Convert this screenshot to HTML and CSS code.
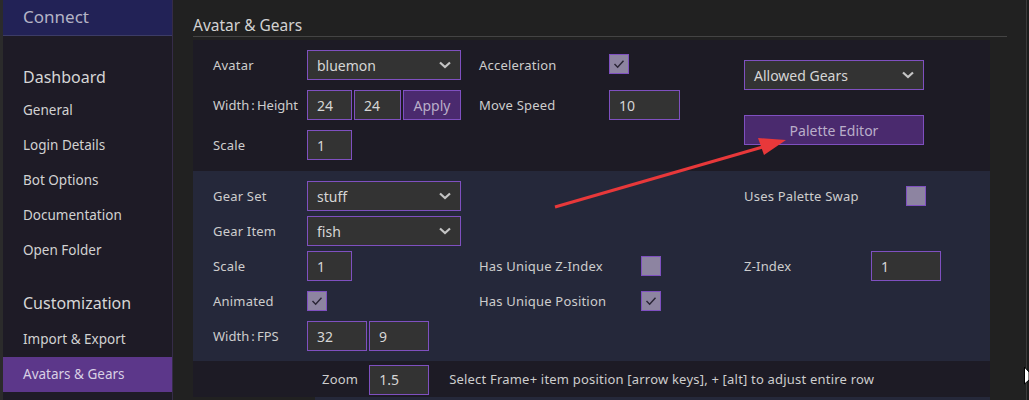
FILE: index.html
```html
<!DOCTYPE html>
<html lang="en">

<head>
    <meta charset="UTF-8">
    <meta name="viewport" content="width=device-width, initial-scale=1.0">
    <title>Avatars &amp; Gears</title>
    <link rel="stylesheet" href="styles.css">
</head>

<body>
    <div class="app">
        <div class="edge"></div>

        <!-- Menu lateral -->
        <nav class="sidebar">
            <div class="brand">Connect</div>
            <div class="nav-group first">Dashboard</div>
            <div class="nav-item">General</div>
            <div class="nav-item">Login Details</div>
            <div class="nav-item">Bot Options</div>
            <div class="nav-item">Documentation</div>
            <div class="nav-item">Open Folder</div>
            <div class="nav-group second">Customization</div>
            <div class="nav-item">Import &amp; Export</div>
            <div class="nav-item active">Avatars &amp; Gears</div>
        </nav>

        <main class="main">
            <h2 class="page-title">Avatar &amp; Gears</h2>

            <!-- Avatar -->
            <section class="panel panel-avatar">
                <label class="label c1 r1">Avatar</label>
                <div class="select c2 r1">
                    <span>bluemon</span>
                    <svg class="chevron" viewBox="0 0 12 8"><polyline points="1,1.5 6,6 11,1.5" /></svg>
                </div>

                <label class="label tight c1 r2">Width&thinsp;:&thinsp;Height</label>
                <div class="pair c2 r2">
                    <input class="field w45" value="24">
                    <input class="field w47" value="24">
                    <button class="btn w58">Apply</button>
                </div>

                <label class="label c1 r3">Scale</label>
                <div class="c2 r3 cell"><input class="field w45" value="1"></div>

                <label class="label c4 r1">Acceleration</label>
                <div class="c5 r1 cell">
                    <span class="check on up"><svg viewBox="0 0 20 20"><polyline points="5,10 8.5,13.5 15,6.5" /></svg></span>
                </div>

                <label class="label c4 r2">Move Speed</label>
                <div class="c5 r2 cell"><input class="field w71" value="10"></div>

                <div class="side-tools">
                    <div class="select wide">
                        <span>Allowed Gears</span>
                        <svg class="chevron" viewBox="0 0 12 8"><polyline points="1,1.5 6,6 11,1.5" /></svg>
                    </div>
                    <button class="btn wide palette-btn">Palette Editor</button>
                </div>
            </section>

            <!-- Gear -->
            <section class="panel panel-gear">
                <label class="label c1 r1">Gear Set</label>
                <div class="select c2 r1">
                    <span>stuff</span>
                    <svg class="chevron" viewBox="0 0 12 8"><polyline points="1,1.5 6,6 11,1.5" /></svg>
                </div>

                <label class="label c1 r2">Gear Item</label>
                <div class="select c2 r2">
                    <span>fish</span>
                    <svg class="chevron" viewBox="0 0 12 8"><polyline points="1,1.5 6,6 11,1.5" /></svg>
                </div>

                <label class="label c1 r3">Scale</label>
                <div class="c2 r3 cell"><input class="field w45" value="1"></div>

                <label class="label c1 r4">Animated</label>
                <div class="c2 r4 cell">
                    <span class="check on"><svg viewBox="0 0 20 20"><polyline points="5,10 8.5,13.5 15,6.5" /></svg></span>
                </div>

                <label class="label tight c1 r5">Width&thinsp;:&thinsp;FPS</label>
                <div class="pair c2 r5">
                    <input class="field w60" value="32">
                    <input class="field w60" value="9">
                </div>

                <label class="label c4 r3">Has Unique Z-Index</label>
                <div class="c5 r3 cell"><span class="check"></span></div>

                <label class="label c4 r4">Has Unique Position</label>
                <div class="c5 r4 cell">
                    <span class="check on"><svg viewBox="0 0 20 20"><polyline points="5,10 8.5,13.5 15,6.5" /></svg></span>
                </div>

                <label class="label c6 r1">Uses Palette Swap</label>
                <div class="c7 r1 cell"><span class="check push"></span></div>

                <label class="label c6 r3">Z-Index</label>
                <div class="c7 r3 cell"><input class="field w70" value="1"></div>
            </section>

            <div class="zoom-bar">
                <span class="label">Zoom</span>
                <input class="field w60" value="1.5">
                <span class="label hint">Select Frame+ item position [arrow keys], + [alt] to adjust entire row</span>
            </div>

            <div class="canvas"></div>
        </main>

        <div class="scroll-edge"></div>
    </div>

    <!-- Seta de anotação -->
    <svg class="annotation" viewBox="0 0 1029 400">
        <line x1="555" y1="207" x2="766" y2="146" />
        <polygon class="head" points="786,140 758,138 764,155" />
        <polygon class="cursor" points="1024.5,367 1024.5,384 1029,380 1029,372" />
    </svg>
</body>

</html>
```

FILE: styles.css
```css
body {
    margin: 0;
    background-color: #212121;
    font-family: "Noto Sans", "Open Sans", sans-serif;
    color: #d0d0d0;
    overflow: hidden;
}

.app {
    display: flex;
    height: 400px;
}

.edge {
    width: 3px;
    background-color: #2b2b2b;
}

/* Menu lateral */
.sidebar {
    width: 169px;
    background-color: #1e1b26;
    border-right: 1px solid #352c48;
    display: flex;
    flex-direction: column;
}

.brand {
    height: 35px;
    line-height: 34px;
    padding-left: 20px;
    background-color: #222256;
    border-bottom: 1px solid #3c3c66;
    color: #b4b4c6;
    font-size: 17px;
}

.nav-group {
    height: 26px;
    line-height: 26px;
    padding-left: 20px;
    font-size: 16px;
    color: #d6d6d6;
}

.nav-group.first {
    margin: 28px 0 3px;
}

.nav-group.second {
    margin: 22px 0 6px;
}

.nav-item {
    height: 35px;
    line-height: 35px;
    padding-left: 20px;
    font-size: 13.5px;
    color: #d2d2d2;
}

.nav-item.active {
    background-color: #5c378a;
    color: #d8d0e4;
}

/* Conteúdo */
.main {
    flex: 1;
    padding-left: 20px;
}

.page-title {
    width: 814px;
    margin: 0 0 3px;
    padding-top: 14px;
    height: 22px;
    line-height: 22px;
    font-size: 15.5px;
    font-weight: normal;
    color: #d2d2d2;
    border-bottom: 1px solid #444;
}

.panel {
    width: 777px;
    display: grid;
    grid-template-columns: 94px 154px 18px 130px 135px 1fr;
    grid-auto-rows: 30px;
    padding-left: 20px;
}

.panel-avatar {
    background-color: #1d1b25;
    row-gap: 10px;
    padding-top: 10px;
    padding-bottom: 11px;
}

.panel-gear {
    background-color: #25283a;
    grid-template-columns: 94px 154px 18px 162px 103px 127px 1fr;
    row-gap: 5px;
    padding-top: 10px;
    padding-bottom: 10px;
}

.c1 { grid-column: 1; }
.c2 { grid-column: 2; }
.c4 { grid-column: 4; }
.c5 { grid-column: 5; }
.c6 { grid-column: 6; }
.c7 { grid-column: 7; }
.r1 { grid-row: 1; }
.r2 { grid-row: 2; }
.r3 { grid-row: 3; }
.r4 { grid-row: 4; }
.r5 { grid-row: 5; }

.label {
    font-size: 13px;
    letter-spacing: 0.2px;
    color: #cdcdcd;
    display: flex;
    align-items: center;
    white-space: nowrap;
}

.label.tight {
    letter-spacing: 0;
}

.cell {
    display: flex;
    align-items: center;
}

.pair {
    display: flex;
    gap: 2px;
}

.field {
    box-sizing: border-box;
    height: 30px;
    padding: 0 0 0 9px;
    border: 1px solid #7f50c0;
    background-color: #333;
    color: #d6d6d6;
    font-family: inherit;
    font-size: 14px;
    outline: none;
}

.w45 { width: 45px; }
.w47 { width: 47px; }
.w58 { width: 58px; }
.w60 { width: 60px; }
.w70 { width: 70px; }
.w71 { width: 71px; }

.select {
    box-sizing: border-box;
    height: 30px;
    display: flex;
    align-items: center;
    justify-content: space-between;
    padding: 0 9px 0 9px;
    border: 1px solid #7f50c0;
    background-color: #333;
    color: #d6d6d6;
    font-size: 14px;
}

.chevron {
    width: 12px;
    height: 8px;
    fill: none;
    stroke: #c4c4c4;
    stroke-width: 2.2;
}

.btn {
    box-sizing: border-box;
    height: 30px;
    border: 1px solid #7f50c0;
    background-color: #4a2a6e;
    color: #b9aec9;
    font-family: inherit;
    font-size: 14px;
    padding: 0;
}

.side-tools {
    grid-column: 6;
    grid-row: 1 / span 3;
    display: flex;
    flex-direction: column;
    padding-top: 10px;
}

.wide {
    width: 180px;
}

.palette-btn {
    margin-top: 25px;
}

.check {
    box-sizing: border-box;
    width: 20px;
    height: 20px;
    border: 1px solid #7f50c0;
    background-color: #8d84a1;
    display: inline-block;
}

.check svg {
    display: block;
    width: 18px;
    height: 18px;
    fill: none;
    stroke: #2a2536;
    stroke-width: 1.6;
}

.check.up {
    margin-top: -2px;
}

.check.push {
    margin-left: 35px;
}

.zoom-bar {
    width: 668px;
    height: 36px;
    padding-left: 129px;
    display: flex;
    align-items: center;
    background-color: #1d1b25;
}

.zoom-bar .field {
    margin: 1px 20px 0 11px;
}

.canvas {
    margin-left: 122px;
    width: 675px;
    height: 10px;
    background-color: #25283a;
}

.scroll-edge {
    width: 2px;
    border-left: 1px solid #3b3b3b;
    background-color: #1c1c1c;
}

/* Seta de anotação */
.annotation {
    position: absolute;
    left: 0;
    top: 0;
    width: 1029px;
    height: 400px;
    pointer-events: none;
}

.annotation line {
    stroke: #e8383a;
    stroke-width: 3;
}

.annotation .head {
    fill: #e8383a;
}

.annotation .cursor {
    fill: #fff;
    stroke: #000;
    stroke-width: 1;
}
```
